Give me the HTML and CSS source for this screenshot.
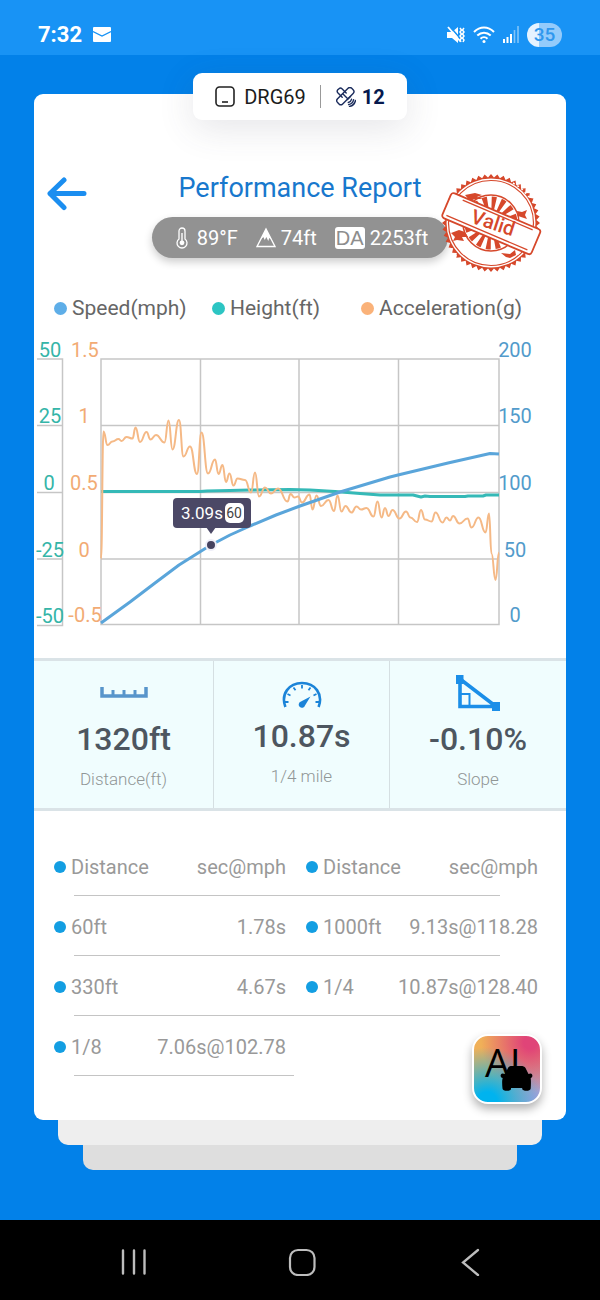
FILE: index.html
```html
<!DOCTYPE html>
<html lang="en">
<head>
<meta charset="utf-8">
<meta name="viewport" content="width=device-width, initial-scale=1">
<title>Performance Report</title>
<link rel="stylesheet" href="styles.css">
</head>
<body>
<header class="status-bar">
  <div class="status-left">
    <time class="clock">7:32</time>
    <svg class="mail" width="18" height="15" viewBox="0 0 18 15" aria-label="Mail"><rect width="18" height="15" rx="1" fill="#fff"/><path d="M0 4.500L9 9L18 4.500" fill="none" stroke="#1692f5" stroke-width="1.300"/></svg>
  </div>
  <div class="status-right">
    <svg width="18" height="18" viewBox="0 0 18 18" aria-label="Muted, vibrate"><path d="M0 6h5l6-5v16l-6-5H0z" fill="#fff"/><path d="M2.500 0l12 14" stroke="#1893f5" stroke-width="1.600"/><path d="M1 1l12.500 14.500" stroke="#fff" stroke-width="1.800"/><path d="M13 2l1.500 2-1.500 2 1.500 2-1.500 2 1.500 2-1.500 2 1 2M17 2l-1.500 2 1.500 2-1.500 2 1.500 2-1.500 2 1.500 2-1 2" fill="none" stroke="#fff" stroke-width="1.500"/></svg>
    <svg width="22" height="18" viewBox="0 0 22 18" aria-label="Wi-Fi" fill="none" stroke="#fff" stroke-width="2"><path d="M1 6C7 0 15 0 21 6"/><path d="M4.300 9.500c4-3.800 9.400-3.800 13.400 0"/><path d="M7.500 12.800c2-2 5-2 7 0"/><circle cx="11" cy="15.500" r="1.500" fill="#fff" stroke="none"/></svg>
    <svg width="16" height="17" viewBox="0 0 16 17" aria-label="Signal"><path d="M1 17v-4M4.500 17v-6M8 17V8" stroke="#fff" stroke-width="2"/><path d="M11.500 17V4M15 17V0" stroke="#fff" stroke-opacity=".45" stroke-width="1.600"/></svg>
    <span class="battery">35</span>
  </div>
</header>

<main class="screen">
  <article class="card">
    <div class="device-chip">
      <svg width="20" height="21" viewBox="0 0 20 21" fill="none" stroke="#222" stroke-width="1.600" aria-hidden="true"><rect x="1" y="1" width="18" height="19" rx="3.500"/><path d="M7 16h6"/></svg>
      <span>DRG69</span>
      <span class="chip-divider"></span>
      <svg width="20" height="20" viewBox="0 0 20 20" fill="none" stroke="#1b2c5c" stroke-width="1.400" stroke-linecap="round" aria-label="Satellites"><rect x="-3.600" y="-10.500" width="7.200" height="20" rx="2.600" transform="translate(9 9.500) rotate(45)"/><path d="M6.200 10.200L1.800 5.800a2.300 2.300 0 0 1 0-3L3 1.700a2.300 2.300 0 0 1 3 0l4.200 4.400M11.500 12.500l3-3M7 7l5 5M12.300 15.500c1.700-.4 2.800-1.500 3.200-3.200M12.600 17.600c2.600-.5 4.500-2.400 5-5M13.500 19.400c3.200-.6 5.300-2.700 6-5.900"/></svg>
      <strong>12</strong>
    </div>

    <div class="report-head">
      <button class="back" type="button" aria-label="Back"><svg width="42" height="34" viewBox="0 0 42 34" fill="none" stroke="#1b8ef0" stroke-width="5" stroke-linecap="round" stroke-linejoin="round"><path d="M38 16.500H4M18 3L4 16.500 18 30.500"/></svg></button>
      <h1>Performance Report</h1>
    </div>

    <div class="conditions">
      <ul class="weather">
        <li class="temperature"><svg width="14" height="22" viewBox="0 0 14 22" aria-hidden="true"><path d="M4 12V4a3 3 0 0 1 6 0v8a5 5 0 1 1-6 0z" fill="none" stroke="#fff" stroke-width="1.300"/><path d="M7 6v9" stroke="#fff" stroke-width="1.400"/><circle cx="7" cy="15.800" r="2.400" fill="#fff"/></svg>89°F</li>
        <li><svg width="20" height="21" viewBox="0 0 20 21" aria-hidden="true"><path d="M10 2L19 19.500H1z" fill="none" stroke="#fff" stroke-width="1.400"/><path d="M10 1.500l5.500 11-2.200-1.500-1 3-2-4-1.500 3-1.500-3-3 3z" fill="#fff"/></svg>74ft</li>
        <li><abbr class="da" title="Density altitude">DA</abbr>2253ft</li>
      </ul>
      <svg class="stamp" width="102" height="100" viewBox="0 0 102 100" role="img" aria-label="Valid">
        <path id="stamp-teeth" fill="#d6482b"/>
        <circle cx="50" cy="50" r="44.500" fill="#fff"/>
        <circle cx="50" cy="50" r="42.500" fill="none" stroke="#d6482b" stroke-width="1.200"/>
        <circle cx="50" cy="50" r="20" fill="none" stroke="#d6482b" stroke-width="13" stroke-dasharray="4 3.854"/>
        <circle cx="50" cy="50" r="28" fill="none" stroke="#d6482b" stroke-width="1.500"/>
        <path d="M24 22l10-2 7 2-5 2 6 2-8 0-5 2zM76 38l5 1 5-2-2 5 2 4-9-3zM10 60l8-3 6 2 3 5-6 0 2 4-7-1-4 1 2-4zM60 80l9 1 5-4 1 5-6 3-4-1z" fill="#d6482b"/>
        <path d="M72 10l8 5 8 9M14 82l7 6" fill="none" stroke="#fff" stroke-width="1.500" stroke-dasharray="2 3"/>
        <g transform="rotate(23 50 50)">
          <rect x="2" y="37" width="97" height="27" rx="3" fill="#fff" stroke="#d6482b" stroke-width="1.800"/>
          <path d="M6 60.500h88M15 40h76" stroke="#d6482b" stroke-width="1.300"/>
        </g>
        <text class="stamp-text" x="52" y="56" transform="rotate(18 50 50)">Valid</text>
      </svg>
    </div>

    <ul class="legend">
      <li class="speed">Speed(mph)</li>
      <li class="height">Height(ft)</li>
      <li class="acceleration">Acceleration(g)</li>
    </ul>

    <svg class="chart" viewBox="34 332 532 304" role="img" aria-label="Speed, height and acceleration over the run">
      <g class="grid">
        <path d="M37 359H62.500V625.500H37M37 425.500H62.500M37 492.500H62.500M37 559H62.500"/>
        <path d="M101 359H499V624.500H101ZM101 425.500H499M101 492.500H499M101 559H499M200.500 359V624.500M299 359V624.500M398.500 359V624.500"/>
      </g>
      <path id="height-line" class="line line-height"/>
      <path id="accel-line" class="line line-accel"/>
      <path id="speed-line" class="line line-speed"/>
      <g class="axis axis-height">
        <text x="50" y="357">50</text><text x="50" y="423">25</text><text x="49" y="490">0</text><text x="50" y="557">-25</text><text x="50" y="623">-50</text>
      </g>
      <g class="axis axis-accel">
        <text x="85" y="357">1.5</text><text x="84" y="423">1</text><text x="84" y="490">0.5</text><text x="84" y="557">0</text><text x="85" y="622">-0.5</text>
      </g>
      <g class="axis axis-speed">
        <text x="515" y="357">200</text><text x="515" y="423">150</text><text x="515" y="490">100</text><text x="515" y="557">50</text><text x="515" y="622">0</text>
      </g>
      <g class="marker">
        <circle cx="211" cy="545" r="5" fill="#45425f" stroke="#eeeef8" stroke-width="2"/>
        <path d="M206 527h10l-5 7z" fill="#4b4866"/>
        <rect x="173" y="498" width="78" height="30" rx="4" fill="#4b4866"/>
        <text class="marker-time" x="181" y="519">3.09s</text>
        <rect x="225" y="503" width="19" height="20" rx="5" fill="#fff"/>
        <text class="marker-speed" x="234" y="518">60</text>
      </g>
    </svg>

    <section class="stats" aria-label="Summary">
      <div class="stat">
        <svg width="48" height="36" viewBox="0 0 48 36" aria-hidden="true"><path d="M2 12v9h44v-9" fill="none" stroke="#5895cb" stroke-width="3.500"/><path d="M13 15v6M24 15v6M35 15v6" stroke="#5895cb" stroke-width="3"/></svg>
        <strong>1320ft</strong><span>Distance(ft)</span>
      </div>
      <div class="stat">
        <svg width="40" height="33" viewBox="0 0 40 33" fill="none" stroke="#1b84d8" aria-hidden="true"><path d="M3.400 32C-1.500 19 7 8 20 8s21.500 11 16.600 24" stroke-width="2.600"/><path d="M3 27h3.500M5.500 19l3 1.500M11.500 12.500l2 2.700M20 10v3.500M28.500 12.500l-2 2.700M34.500 19l-3 1.500M37 27h-3.500" stroke-width="1.800"/><path d="M28.500 21.500l-5.500 9a3.200 3.200 0 1 1-4-4z" fill="#1b84d8" stroke="none"/></svg>
        <strong>10.87s</strong><span>1/4 mile</span>
      </div>
      <div class="stat">
        <svg width="44" height="36" viewBox="0 0 44 36" fill="none" stroke="#1b8ee8" aria-hidden="true"><path d="M4 4v27.500h36z" stroke-width="3.600"/><path d="M4 19h9.500v12" stroke-width="2"/><path d="M0 0h7.500v9H0zM36 27h8v9h-8z" fill="#1b8ee8" stroke="none"/></svg>
        <strong>-0.10%</strong><span>Slope</span>
      </div>
    </section>

    <table class="splits">
      <thead>
        <tr><th class="mark" scope="col">Distance</th><th scope="col">sec@mph</th><th class="mark" scope="col">Distance</th><th scope="col">sec@mph</th></tr>
      </thead>
      <tbody>
        <tr><td class="mark">60ft</td><td>1.78s</td><td class="mark">1000ft</td><td>9.13s@118.28</td></tr>
        <tr><td class="mark">330ft</td><td>4.67s</td><td class="mark">1/4</td><td>10.87s@128.40</td></tr>
        <tr class="half"><td class="mark">1/8</td><td>7.06s@102.78</td></tr>
      </tbody>
    </table>

    <button class="ai" type="button" aria-label="AI car assistant">
      <svg width="66" height="66" viewBox="0 0 66 66" aria-hidden="true"><text x="11" y="41">AI</text><path d="M34 32c.5-1.500 2-2 4-2h9c2 0 3.500.5 4.500 2l3 6 2-.5c2.500.500 2.500 4 .2 4.500.3 2 .3 6 0 10.500 0 3-8 3-8.500.500v-1H37v1c-.5 2.500-8.500 2.500-8.500-.5-.5-4.500-.5-8.500.2-10.500-2.700-.5-2.700-4-.2-4.500l2.500.5z" fill="#000"/></svg>
    </button>
  </article>
  <div class="sheet sheet-near"></div>
  <div class="sheet sheet-far"></div>
</main>

<nav class="system-nav" aria-label="System">
  <button type="button" aria-label="Recent apps"><svg width="28" height="28" viewBox="0 0 28 28" stroke="#bdbdbd" stroke-width="2.400" stroke-linecap="round"><path d="M3 2.500v23M14 2.500v23M24.500 2.500v23"/></svg></button>
  <button type="button" aria-label="Home"><svg width="28" height="28" viewBox="0 0 28 28" fill="none" stroke="#bdbdbd" stroke-width="2.200"><rect x="2" y="2" width="24.500" height="25" rx="8"/></svg></button>
  <button type="button" aria-label="Back"><svg width="28" height="28" viewBox="0 0 28 28" fill="none" stroke="#bdbdbd" stroke-width="2.300" stroke-linecap="round"><path d="M22 2L7 14.500 22 27"/></svg></button>
</nav>
<script src="chart.js"></script>
</body>
</html>
```
FILE: styles.css
```css
* { box-sizing: border-box; }

body {
  margin: 0;
  min-height: 100vh;
  display: flex;
  flex-direction: column;
  background: #0281e9;
  font-family: Roboto, "Liberation Sans", sans-serif;
  font-size: 20px;
}

button {
  padding: 0;
  border: 0;
  background: none;
  cursor: pointer;
}

svg { display: block; flex: none; }

ul { margin: 0; padding: 0; list-style: none; }

.status-bar {
  height: 55px;
  padding: 14px 38px 0;
  display: flex;
  align-items: center;
  justify-content: space-between;
  background: #1893f5;
  color: #fff;
}

.status-left { display: flex; align-items: center; gap: 11px; }
.clock { font-size: 22px; font-weight: 700; }
.status-right { display: flex; align-items: center; gap: 8px; }

.battery {
  width: 35px;
  border-radius: 12px;
  background: linear-gradient(90deg, #e5f3ff 35%, #94cbfb 35%);
  color: #2f97ee;
  font-size: 19px;
  font-weight: 500;
  line-height: 24px;
  text-align: center;
}

.screen { flex: 1; padding: 39px 34px 50px; }

.card {
  position: relative;
  padding-bottom: 44px;
  border-radius: 9px;
  background: #fff;
}

.device-chip {
  position: relative;
  top: -21px;
  width: max-content;
  height: 47px;
  margin: 0 auto -21px;
  padding: 0 22px;
  display: flex;
  align-items: center;
  gap: 9px;
  border-radius: 9px;
  background: #fff;
  box-shadow: 0 8px 36px rgba(70, 70, 90, 0.14);
  color: #1c1c1c;
}

.device-chip strong { margin-left: -3px; color: #06194e; font-weight: 700; }
.chip-divider { width: 1px; height: 23px; margin: 0 6px 0 5px; background: #999; }

.report-head {
  margin-top: 53px;
  padding: 0 12px;
  display: grid;
  grid-template-columns: 42px 1fr 42px;
}

.back { padding-top: 4px; }

h1 {
  margin: 0;
  color: #1878cd;
  font-size: 27px;
  font-weight: 400;
  line-height: 30px;
  text-align: center;
  white-space: nowrap;
}

.conditions { position: relative; margin: 6px 24px 0; }

.weather {
  width: max-content;
  height: 41px;
  margin: 0 auto;
  padding: 0 20px 0 23px;
  display: flex;
  align-items: center;
  gap: 18px;
  border-radius: 21px;
  background: #929292;
  box-shadow: 0 4px 8px rgba(0, 0, 0, 0.2);
  color: #fff;
}

.weather li { display: flex; align-items: center; gap: 5px; }
.weather .temperature { gap: 8px; }

.da {
  width: 30px;
  border-radius: 3px;
  background: #fff;
  color: #8d8d8d;
  font-family: "Liberation Sans", sans-serif;
  line-height: 22px;
  text-align: center;
  text-decoration: none;
}

.stamp { position: absolute; right: -1px; top: -44px; }

.stamp-text {
  fill: #d6482b;
  font-size: 20px;
  font-weight: 500;
  text-anchor: middle;
}

.legend {
  margin-top: 38px;
  padding-left: 20px;
  display: grid;
  grid-template-columns: 158px 149px 1fr;
  color: #666;
  font-size: 21px;
  line-height: 24px;
  white-space: nowrap;
}

.legend li { display: flex; align-items: center; gap: 5px; }

.legend li::before {
  content: "";
  flex: none;
  width: 13px;
  height: 13px;
  border-radius: 50%;
}

.speed::before { background: #5eaee8; }
.height::before { background: #2cc5c3; }
.acceleration::before { background: #fab279; }

.chart { width: 100%; margin-top: 12px; }
.grid { fill: none; stroke: #c6c6c6; stroke-width: 1.5; }
.line { fill: none; stroke-linejoin: round; }
.line-speed { stroke: #5aa5da; stroke-width: 3; }
.line-height { stroke: #35b9b7; stroke-width: 3; }
.line-accel { stroke: #f5b986; stroke-width: 2; }
.axis { font-size: 20px; text-anchor: middle; }
.axis-height { fill: #35b5a8; }
.axis-accel { fill: #f2ab74; }
.axis-speed { fill: #529bcb; }
.marker-time { fill: #fff; font-size: 17px; }
.marker-speed { fill: #444; font-size: 14px; text-anchor: middle; }

.stats {
  margin-top: 22px;
  display: grid;
  grid-template-columns: 179fr 176fr 177fr;
  border-top: 3px solid #dae3e7;
  border-bottom: 3px solid #dae3e7;
  background: #f0fdfe;
}

.stat {
  min-height: 147px;
  padding-top: 14px;
  display: flex;
  flex-direction: column;
  align-items: center;
}

.stat + .stat { border-left: 1px solid #d5dfe2; }

.stat strong {
  margin-top: 9px;
  color: #4d5660;
  font-size: 32px;
  font-weight: 500;
  line-height: 38px;
}

.stat span {
  margin-top: 11px;
  color: #909696;
  font-size: 17px;
  font-weight: 300;
  line-height: 20px;
}

.splits {
  display: block;
  margin-top: 25px;
  padding: 0 28px 0 20px;
  color: #999;
}

.splits thead, .splits tbody { display: block; }

.splits tr {
  display: grid;
  grid-template-columns: 90px 1fr 110px 1fr;
}

.splits tr::after {
  content: "";
  grid-column: 1 / -1;
  height: 1px;
  margin: 0 38px 0 20px;
  background: #c4c4c4;
}

.splits .half::after { margin-right: 244px; }

.splits th, .splits td {
  padding: 17px 0 14px;
  font-weight: 400;
  line-height: 28px;
  text-align: right;
  white-space: nowrap;
}

.splits .mark { display: flex; align-items: center; gap: 5px; }
.splits .mark:nth-child(3) { padding-left: 20px; }

.splits .mark::before {
  content: "";
  flex: none;
  width: 12px;
  height: 12px;
  border-radius: 50%;
  background: #139ee2;
}

.ai {
  position: absolute;
  right: 24px;
  bottom: 16px;
  border: 2px solid #fff;
  border-radius: 16px;
  background:
    radial-gradient(circle at 20% 100%, #00b3ef 12%, rgba(0, 179, 239, 0) 65%),
    radial-gradient(circle at 85% 10%, #e04478 8%, rgba(224, 68, 120, 0) 60%),
    radial-gradient(circle at 100% 100%, #a7a0d4 10%, rgba(167, 160, 212, 0) 60%),
    #f0b058;
  box-shadow: 0 5px 10px rgba(0, 0, 0, 0.3);
}

.ai text { font-family: "Open Sans", sans-serif; font-size: 39px; }

.sheet { height: 25px; border-radius: 0 0 10px 10px; }
.sheet-near { margin: 0 24px; background: #eee; }
.sheet-far { margin: 0 49px; background: #dedede; }

.system-nav {
  height: 80px;
  padding: 4px 116px 0 120px;
  display: flex;
  align-items: center;
  justify-content: space-between;
  background: #000;
}
```
FILE: chart.js
```js
const speed = [[101,623],[130,602],[155,583],[179,565],[206,548],[211,545],[230,535],[250,526],[276,515],[300,506],[340,492],[390,477],[398,475],[448,463],[490,453.5],[499,454]];
const height = [[101,491.5],[200,491.5],[207,491],[230,490.5],[250,490],[290,489.5],[310,490],[335,491.5],[360,493.5],[380,495],[398,495],[413,495],[421,497],[425,496],[430,496.5],[465,496.5],[468,496],[483,496],[486,495],[499,495]];
const accel = [[101,559],[103.5,431.5],[107.5,445],[112.5,441.5],[118.5,439],[121.5,441],[126.5,437],[132.5,438.5],[135.5,427.5],[140,442],[146.5,432],[150.5,439.5],[156,435],[164.5,442.5],[168.5,420.5],[172.5,449.5],[179,420],[183.5,456.5],[190,446.5],[197,474],[201.5,432.5],[208,473.5],[215,459.5],[218.5,474],[222.5,465],[226,482],[229.5,473.5],[233.5,485.5],[237.5,478.5],[245,480],[251,492.5],[255,472.5],[259,496.5],[265,487.5],[271,493.5],[278,488.5],[287.5,501.5],[290.5,494],[294.5,497.5],[298,496.5],[302,502.5],[309.5,494.5],[312.5,509.5],[316.5,495.5],[321,506],[328.5,500],[334,511],[337.5,495.5],[341.5,511.5],[345.5,506],[351.5,512.5],[356.5,506.5],[361,509.5],[366.5,508],[373.5,516.5],[377.5,501.5],[381.5,517.5],[385,508],[388.5,516],[392.5,510],[399.5,518.5],[406,511.5],[410.5,517.5],[417,522],[421,510],[425,519.5],[431.5,521.5],[435.5,512.5],[442.5,522.5],[446.5,517.5],[450,520.5],[453,516],[459.5,523.5],[467.5,518.5],[471.5,527.5],[478.5,517.5],[485.5,532.5],[489,513.5],[491.5,553.5],[495.5,580],[499,552.5]];

const straight = points => "M" + points.map(p => p.join(" ")).join("L");

// Joins the samples with curves that are level at every peak and trough.
const smooth = points => points.reduce((d, [x, y], i) => {
  if (i === 0) return `M${x} ${y}`;
  const [px, py] = points[i - 1];
  const mid = (px + x) / 2;
  return `${d}C${mid} ${py} ${mid} ${y} ${x} ${y}`;
}, "");

document.getElementById("speed-line").setAttribute("d", straight(speed));
document.getElementById("height-line").setAttribute("d", straight(height));
document.getElementById("accel-line").setAttribute("d", smooth(accel));

// Saw-tooth rim of the stamp.
const teeth = 48;
const rim = Array.from({ length: teeth * 2 }, (_, i) => {
  const angle = i * Math.PI / teeth;
  const radius = i % 2 ? 45.5 : 49;
  return [(50 + radius * Math.cos(angle)).toFixed(2), (50 + radius * Math.sin(angle)).toFixed(2)];
});
document.getElementById("stamp-teeth").setAttribute("d", straight(rim) + "Z");
```
